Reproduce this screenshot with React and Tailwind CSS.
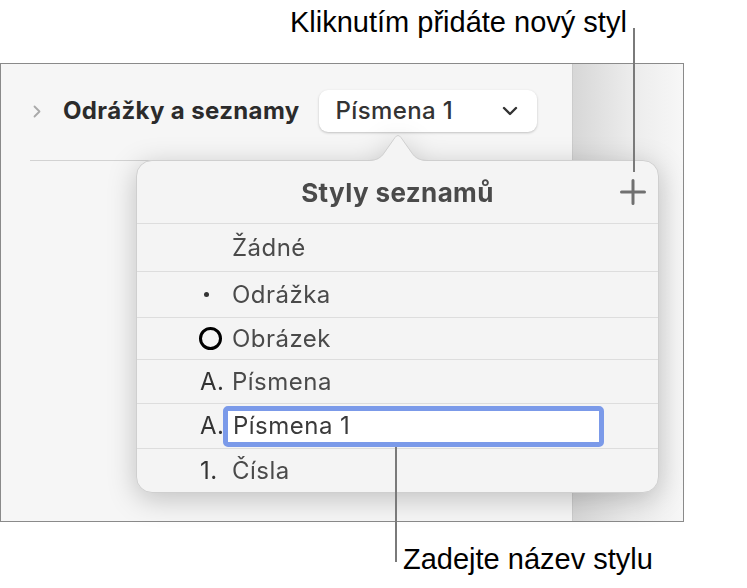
import React from "react";

const ui = { fontFamily: "Inter, 'Noto Sans', sans-serif" };
const callout = { fontFamily: "'Liberation Sans', Arial, sans-serif" };

function Row({ marker, children, h, last }) {
  return (
    <div
      className={`flex items-center ${last ? "" : "border-b border-[#dddddd]"} ${h}`}
    >
      <div className="w-[95px] shrink-0 pl-[63px] flex items-center text-[#333333]">
        {marker}
      </div>
      {children}
    </div>
  );
}

export default function App() {
  return (
    <div className="relative w-[747px] h-[588px] bg-white overflow-hidden" style={ui}>
      {/* Frame */}
      <div className="pt-[63px]">
        <div className="flex w-[684px] h-[459px] border border-[#8a8a8a]">
          <div className="flex-1 bg-[#f6f6f6] flex flex-col">
            <div className="flex items-center pl-[32px] pt-[26px]">
              <svg width="8" height="13" viewBox="0 0 8 13" className="shrink-0">
                <path d="M1.5 1.5 L6.5 6.5 L1.5 11.5" fill="none" stroke="#a9a9a9" strokeWidth="1.8" strokeLinecap="round" strokeLinejoin="round" />
              </svg>
              <span className="ml-[22px] text-[24px] font-bold text-[#2b2b2b] tracking-[0.015em]">
                Odrážky a seznamy
              </span>
              <div className="ml-[19px] flex items-center w-[218px] h-[42px] bg-white rounded-[9px] shadow-[0_1px_2.5px_rgba(0,0,0,0.22)] pl-[17px] pr-[19px]">
                <span className="flex-1 text-[24px] font-medium text-[#333333] tracking-[0.015em]">Písmena 1</span>
                <svg width="16" height="10" viewBox="0 0 16 10">
                  <path d="M2 2 L8 8 L14 2" fill="none" stroke="#333333" strokeWidth="2.4" strokeLinecap="round" strokeLinejoin="round" />
                </svg>
              </div>
            </div>
            <div className="mt-[28px] ml-[29px] h-px bg-[#d2d2d2]" />
          </div>
          <div className="w-[111px] border-l border-[#cccccc] bg-gradient-to-r from-[#d7d7d7] via-[#ebebeb] to-[#f7f7f7]" />
        </div>
      </div>

      {/* Popover */}
      <div className="absolute left-[136px] top-[160px] w-[523px] drop-shadow-[0_6px_14px_rgba(0,0,0,0.22)]">
        <svg
          width="64"
          height="28"
          viewBox="0 0 64 28"
          className="absolute left-[230px] top-[-26px] z-10"
        >
          <path
            d="M0 27 C9 27 13 25.5 17 21 L29 4 Q32 0 35 4 L47 21 C51 25.5 55 27 64 27 Z"
            fill="#f4f4f4"
          />
          <path
            d="M0 26.5 C9 26.5 13 25 17 20.5 L29 3.5 Q32 -0.5 35 3.5 L47 20.5 C51 25 55 26.5 64 26.5"
            fill="none"
            stroke="#cfcfcf"
            strokeWidth="1"
          />
        </svg>
        <div className="rounded-[16px] border border-[#cfcfcf] bg-[#f4f4f4] overflow-hidden">
          <div className="grid grid-cols-[1fr_auto_1fr] items-center h-[63px] border-b border-[#dddddd]">
            <div />
            <div className="text-[26px] font-bold text-[#4a4a4a] tracking-[0.015em]">Styly seznamů</div>
            <div className="flex justify-end pr-[12px]">
              <svg width="26" height="26" viewBox="0 0 26 26">
                <path d="M13 1.5 V24.5 M1.5 13 H24.5" stroke="#707070" strokeWidth="3" strokeLinecap="round" />
              </svg>
            </div>
          </div>
          <div className="text-[24px] text-[#4a4a4a] tracking-[0.02em]">
            <Row h="h-[48px]" marker={null}>
              <span>Žádné</span>
            </Row>
            <Row
              h="h-[46px]"
              marker={<span className="ml-[4px] inline-block w-[5px] h-[5px] rounded-full bg-[#333333]" />}
            >
              <span>Odrážka</span>
            </Row>
            <Row
              h="h-[42px]"
              marker={<span className="-ml-[1px] inline-block w-[23px] h-[23px] rounded-full border-[3px] border-black" />}
            >
              <span>Obrázek</span>
            </Row>
            <Row h="h-[44px]" marker={<span className="text-[#333333]">A.</span>}>
              <span>Písmena</span>
            </Row>
            <Row h="h-[45px]" marker={<span className="text-[#333333]">A.</span>}>
              <div className="-ml-[9px] flex items-center w-[381px] h-[41px] bg-white border-[5px] border-[#7b9ae9] rounded-[5px] pl-[5px]">
                <span className="text-[#3a3a3a]">Písmena 1</span>
              </div>
            </Row>
            <Row h="h-[43px]" last marker={<span className="text-[#333333]">1.</span>}>
              <span>Čísla</span>
            </Row>
          </div>
        </div>
      </div>

      {/* Callouts */}
      <div
        className="absolute left-[290px] top-[8px] text-[29px] leading-[29px] text-black whitespace-nowrap"
        style={callout}
      >
        Kliknutím přidáte nový styl
      </div>
      <div className="absolute left-[633px] top-[28px] w-[2px] h-[144px] bg-[#7a7a7a]" />

      <div className="absolute left-[395px] top-[447px] w-[2px] h-[115px] bg-[#7a7a7a]" />
      <div
        className="absolute left-[403px] top-[545px] text-[29px] leading-[29px] text-black whitespace-nowrap"
        style={callout}
      >
        Zadejte název stylu
      </div>
    </div>
  );
}
